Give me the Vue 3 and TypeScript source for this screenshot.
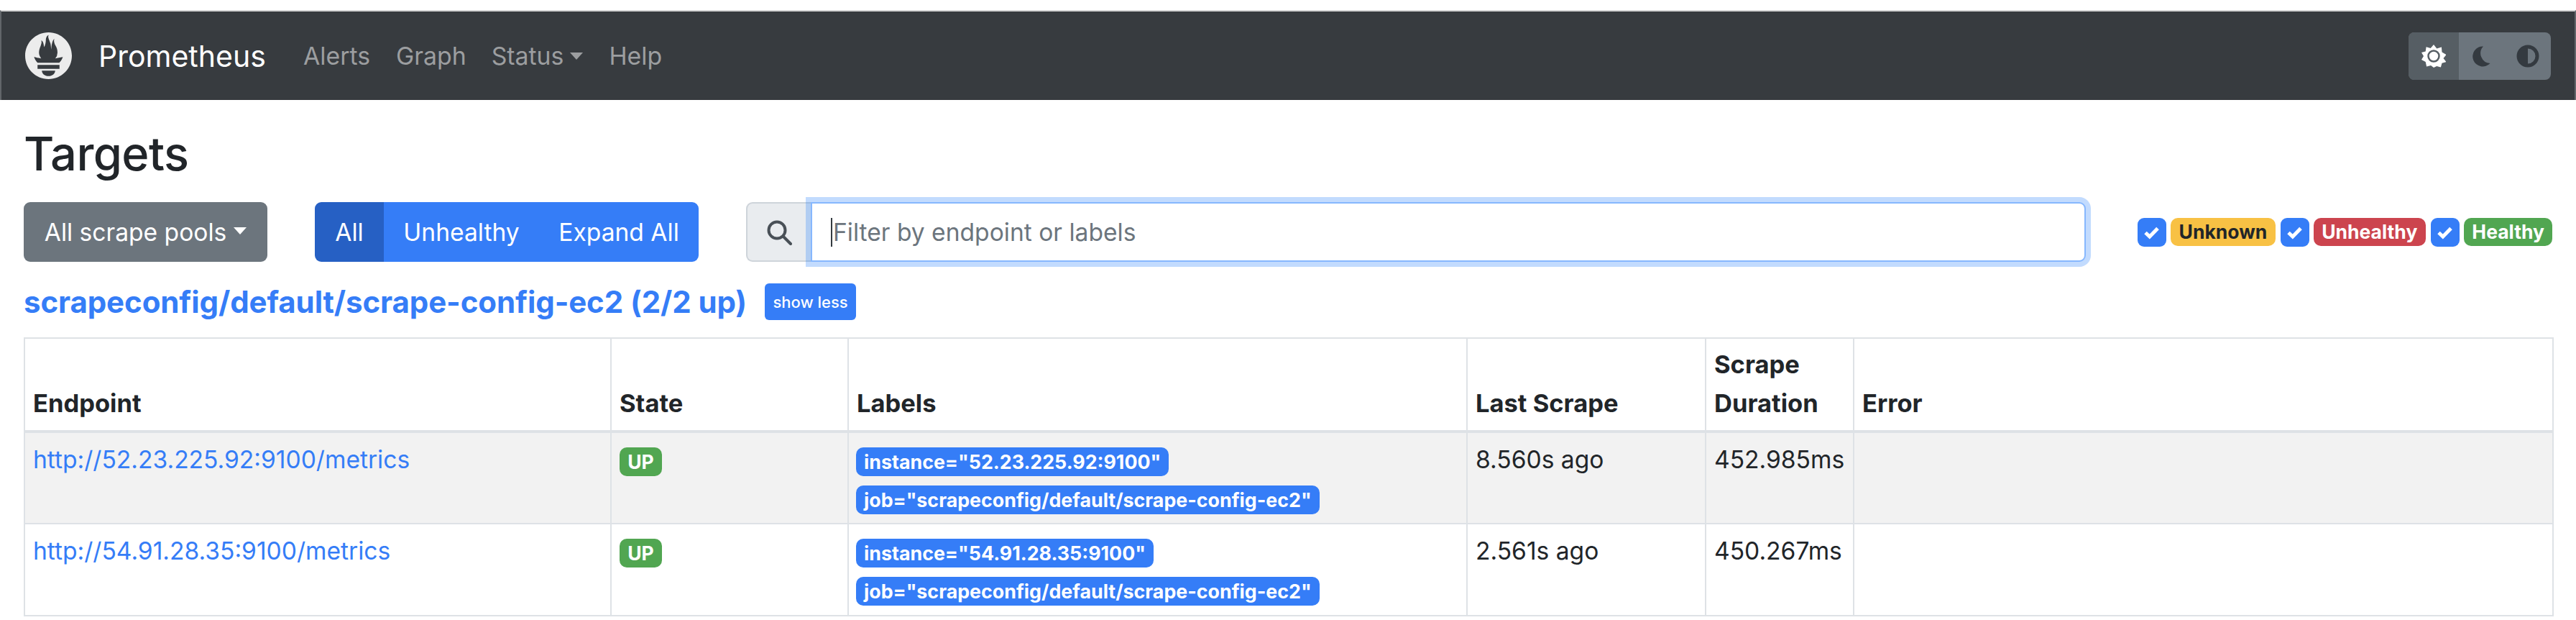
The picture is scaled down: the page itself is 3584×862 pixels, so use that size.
<script setup lang="ts">
const rows = [
  { url: 'http://52.23.225.92:9100/metrics', instance: 'instance="52.23.225.92:9100"', scrape: '8.560s ago', duration: '452.985ms' },
  { url: 'http://54.91.28.35:9100/metrics', instance: 'instance="54.91.28.35:9100"', scrape: '2.561s ago', duration: '450.267ms' },
]
const job = 'job="scrapeconfig/default/scrape-config-ec2"'
const filters = [
  { label: 'Unknown', cls: 'warn' },
  { label: 'Unhealthy', cls: 'danger' },
  { label: 'Healthy', cls: 'success' },
]
</script>

<template>
  <div class="page">
    <nav class="nav">
      <svg class="logo" viewBox="0 0 24 24"><path fill="#ececec" d="M12 0C5.373 0 0 5.372 0 11.999c0 6.627 5.373 12 12 12s12-5.373 12-12S18.627 0 12 0zm0 22.459c-1.885 0-3.414-1.26-3.414-2.814h6.828c0 1.553-1.528 2.814-3.414 2.814zm5.64-3.745H6.36v-2.046h11.28v2.046zm-.04-3.098H6.391c-.037-.043-.075-.086-.111-.13-1.155-1.401-1.427-2.133-1.691-2.879-.004-.025 1.4.287 2.396.511 0 0 .512.119 1.26.255-.718-.842-1.145-1.912-1.145-3.006 0-2.401 1.842-4.5 1.177-6.196.647.053 1.339 1.365 1.386 3.416.688-.951.976-2.688.976-3.753 0-1.103.727-2.384 1.454-2.428-.648 1.068.168 1.984.894 4.256.272.854.237 2.29.447 3.2.07-1.891.395-4.65 1.595-5.603-.529 1.2.078 2.702.494 3.424.671 1.165 1.078 2.048 1.078 3.717a4.521 4.521 0 0 1-1.136 2.986c.785-.147 1.327-.28 1.327-.28l2.549-.497s-.37 1.523-1.795 2.99z"/></svg>
      <span class="brand">Prometheus</span>
      <span class="nav-link alerts">Alerts</span>
      <span class="nav-link graph">Graph</span>
      <span class="nav-link status">Status<i class="caret"></i></span>
      <span class="nav-link help">Help</span>
      <div class="theme">
        <span class="theme-btn active">
          <svg width="34" height="34" viewBox="0 0 34 34"><path fill="#fff" d="M17 1l4.300 5.600 6.600-2 .6 6.900 6 3.500-4 5 4 5-6 1.700-1.600 5.900-5.700-1.600L17 33l-3.900-3-6 1.500-1.400-6.400L0 22l3-5-3-5 5.700-1.600.9-6.100 6.100 1.700z"/><circle cx="17" cy="17" r="7.500" fill="#fff" stroke="#565e64" stroke-width="2.500"/></svg>
        </span>
        <span class="theme-btn">
          <svg width="30" height="30" viewBox="0 0 30 30"><path fill="#343a40" d="M17 1.500A14 14 0 1 0 26.500 25 14 14 0 0 1 17 1.500z"/></svg>
        </span>
        <span class="theme-btn">
          <svg width="32" height="32" viewBox="0 0 32 32"><circle cx="16" cy="16" r="13" fill="none" stroke="#343a40" stroke-width="5"/><path fill="#343a40" d="M16 2a14 14 0 0 0 0 28z"/></svg>
        </span>
      </div>
    </nav>

    <main class="main">
      <h1 class="title">Targets</h1>
      <div class="controls">
        <button class="btn pools">All scrape pools<i class="caret white"></i></button>
        <div class="group">
          <button class="btn seg seg-active">All</button>
          <button class="btn seg seg-mid">Unhealthy</button>
          <button class="btn seg seg-end">Expand All</button>
        </div>
        <div class="search">
          <span class="search-icon">
            <svg width="36" height="36" viewBox="0 0 36 36"><circle cx="15" cy="15" r="11.500" fill="none" stroke="#495057" stroke-width="4"/><path d="M24 24l10 10" stroke="#495057" stroke-width="4" stroke-linecap="round"/></svg>
          </span>
          <div class="input"><i class="cursor"></i><span>Filter by endpoint or labels</span></div>
        </div>
        <div class="filters">
          <template v-for="f in filters" :key="f.label">
            <span class="check"><svg width="24" height="24" viewBox="0 0 24 24"><path d="M3 12.500l5.800 5.500L20 6.500" fill="none" stroke="#fff" stroke-width="5"/></svg></span>
            <span class="badge" :class="f.cls">{{ f.label }}</span>
          </template>
        </div>
      </div>

      <div class="pool">
        <a class="pool-name">scrapeconfig/default/scrape-config-ec2 (2/2 up)</a>
        <button class="show-less">show less</button>
      </div>

      <table class="table">
        <colgroup>
          <col class="c1" /><col class="c2" /><col class="c3" /><col class="c4" /><col class="c5" /><col class="c6" />
        </colgroup>
        <thead>
          <tr>
            <th>Endpoint</th><th>State</th><th>Labels</th><th>Last Scrape</th><th>Scrape Duration</th><th>Error</th>
          </tr>
        </thead>
        <tbody>
          <tr v-for="r in rows" :key="r.url">
            <td><a class="link">{{ r.url }}</a></td>
            <td><span class="badge success up">UP</span></td>
            <td>
              <div class="labels">
                <span class="badge label">{{ r.instance }}</span>
                <span class="badge label">{{ job }}</span>
              </div>
            </td>
            <td>{{ r.scrape }}</td>
            <td>{{ r.duration }}</td>
            <td></td>
          </tr>
        </tbody>
      </table>
    </main>
  </div>
</template>

<style>
html, body { margin: 0; background: #fff; }
</style>

<style scoped>
.page { width: 3584px; height: 862px; overflow: hidden; font-family: Inter, "Liberation Sans", sans-serif; color: #212529; font-size: 33.600px; box-sizing: border-box; padding-top: 14px; }
.nav { height: 125px; box-sizing: border-box; background: #373b3f; border-top: 2px solid #d4d4d4; border-left: 2px solid #62666a; border-right: 2px solid #62666a; display: flex; align-items: center; }
.logo { width: 65px; height: 65px; margin-left: 33px; flex: none; }
.brand { color: #fff; font-size: 41px; margin-left: 37px; width: 232px; }
.nav-link { color: #9c9ea0; font-size: 33.800px; }
.alerts { margin-left: 53px; }
.graph { margin-left: 36px; }
.status { margin-left: 35px; display: inline-flex; align-items: center; }
.help { margin-left: 36px; }
.caret { display: inline-block; width: 0; height: 0; border-left: 9px solid transparent; border-right: 9px solid transparent; border-top: 10px solid #9c9ea0; margin-left: 9px; }
.caret.white { border-top-color: #fff; margin-left: 10px; position: relative; top: -2px; }
.theme { margin-left: auto; margin-right: 33px; display: flex; height: 66px; width: 198px; border-radius: 8px; overflow: hidden; background: #6c757d; }
.theme-btn { width: 64px; display: flex; align-items: center; justify-content: center; }
.theme-btn.active { background: #565e64; width: 70px; }
.main { padding: 0 31px 0 33px; }
.title { font-size: 65px; font-weight: 500; margin: 36px 0 0; line-height: 78px; letter-spacing: -0.6px; }
.controls { display: flex; align-items: center; margin-top: 28px; height: 83px; }
.btn { border: none; font: inherit; font-size: 33.600px; color: #fff; height: 83px; padding: 0; white-space: nowrap; }
.pools { background: #6c757d; width: 339px; border-radius: 9px; display: flex; align-items: center; justify-content: center; }
.group { display: flex; margin-left: 66px; border-radius: 9px; overflow: hidden; width: 534px; }
.seg { background: #357df7; }
.seg-active { background: #2660c4; width: 96px; }
.seg-mid { width: 216px; }
.seg-end { width: 222px; }
.search { display: flex; margin-left: 66px; width: 1864px; flex: none; }
.search-icon { width: 90px; height: 83px; box-sizing: border-box; border: 2px solid #ced4da; border-right: none; background: #e9ecef; border-radius: 9px 0 0 9px; display: flex; align-items: center; justify-content: center; }
.input { flex: 1; height: 83px; box-sizing: border-box; border: 2px solid #86b7fe; border-radius: 0 9px 9px 0; box-shadow: 0 0 0 7px rgba(13,110,253,.25); background: #fff; display: flex; align-items: center; padding-left: 26px; color: #6c757d; font-size: 33.600px; position: relative; }
.cursor { width: 2px; height: 40px; background: #343a40; margin-right: 1px; }
.filters { margin-left: 72px; display: flex; align-items: center; flex: none; }
.check { width: 40px; height: 40px; background: #357df7; border-radius: 9px; display: flex; align-items: center; justify-content: center; margin-left: 7px; }
.filters .check:first-child { margin-left: 0; }
.badge { display: inline-flex; align-items: center; justify-content: center; height: 39px; box-sizing: border-box; padding: 0 11.500px; border-radius: 10px; font-size: 26.500px; font-weight: 700; color: #fff; white-space: nowrap; line-height: 1; }
.filters .badge { margin-left: 6px; }
.warn { background: #f8c144; color: #212529; }
.danger { background: #cc444e; }
.success { background: #51a651; }
.pool { display: flex; align-items: center; margin-top: 30px; height: 51px; }
.pool-name { color: #357df7; font-size: 42px; font-weight: 700; letter-spacing: -0.1px; }
.show-less { margin-left: 25px; width: 127px; height: 51px; background: #357df7; border: none; border-radius: 6px; color: #fff; font: inherit; font-size: 22px; font-weight: 500; padding: 0; }
.table { margin-top: 24px; width: 3518px; table-layout: fixed; border-collapse: collapse; border: 2px solid #dee2e6; }
.c1 { width: 816px; } .c2 { width: 330px; } .c3 { width: 861px; } .c4 { width: 332px; } .c5 { width: 206px; } .c6 { width: 973px; }
th, td { border: 2px solid #dee2e6; padding: 12px 11px; text-align: left; vertical-align: top; font-size: 33.600px; line-height: 50px; }
th { vertical-align: bottom; font-weight: 700; border-bottom-width: 4px; font-size: 34.500px; padding: 8px 11px 10px; line-height: 54px; }
thead tr { height: 130px; }
tbody tr { height: 128px; }
tbody tr:nth-child(1) td { background: #f2f2f2; }
tbody td { padding-top: 12px; padding-bottom: 0; }
.link { color: #357df7; }
.up { margin-top: 8px; vertical-align: top; width: 59px; padding: 0; height: 40px; }
.labels { display: flex; flex-direction: column; align-items: flex-start; gap: 13px; margin-top: 8px; margin-left: -1px; }
.label { background: #357df7; height: 40px; font-size: 26.800px; padding: 0 11px; }
</style>
